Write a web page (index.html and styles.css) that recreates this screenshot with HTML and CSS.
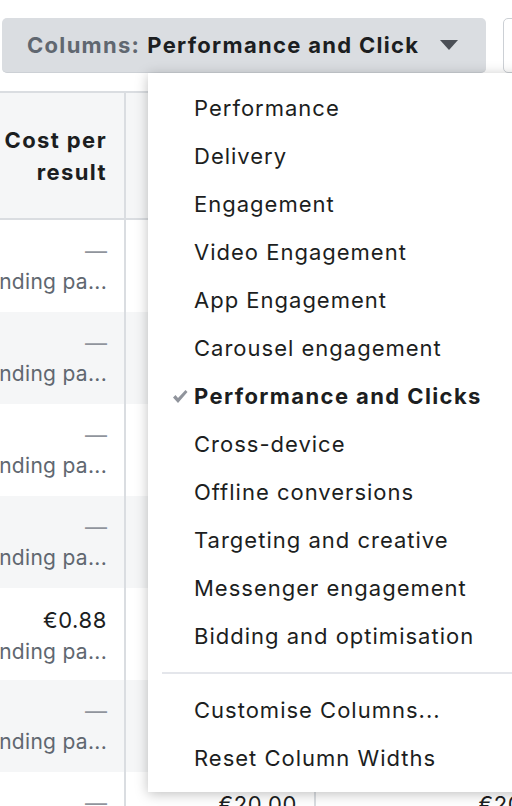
FILE: index.html
```html
<!DOCTYPE html>
<html>
<head>
    <title>Ads Manager Columns</title>
    <link rel="stylesheet" href="styles.css">
</head>
<body>
    <!-- toolbar -->
    <div class="toolbar">
        <button class="columns-btn">
            <span class="label">Columns:</span>
            <span class="value">Performance and Click</span>
            <span class="caret"></span>
        </button>
        <button class="side-btn"></button>
    </div>

    <!-- table behind the menu -->
    <div class="table">
        <div class="row head">
            <div class="cell first"><span class="title">Cost per<br>result</span></div>
            <div class="cell second"></div>
            <div class="cell third"></div>
        </div>
        <div class="row">
            <div class="cell first"><span class="dash">—</span><span class="sub">nding pa...</span></div>
            <div class="cell second"></div>
            <div class="cell third"></div>
        </div>
        <div class="row alt">
            <div class="cell first"><span class="dash">—</span><span class="sub">nding pa...</span></div>
            <div class="cell second"></div>
            <div class="cell third"></div>
        </div>
        <div class="row">
            <div class="cell first"><span class="dash">—</span><span class="sub">nding pa...</span></div>
            <div class="cell second"></div>
            <div class="cell third"></div>
        </div>
        <div class="row alt">
            <div class="cell first"><span class="dash">—</span><span class="sub">nding pa...</span></div>
            <div class="cell second"></div>
            <div class="cell third"></div>
        </div>
        <div class="row">
            <div class="cell first"><span class="money">€0.88</span><span class="sub">nding pa...</span></div>
            <div class="cell second"></div>
            <div class="cell third"></div>
        </div>
        <div class="row alt">
            <div class="cell first"><span class="dash">—</span><span class="sub">nding pa...</span></div>
            <div class="cell second"></div>
            <div class="cell third"></div>
        </div>
        <div class="row">
            <div class="cell first"><span class="dash">—</span></div>
            <div class="cell second"><span class="money">€20.00</span></div>
            <div class="cell third"><span class="money">€20.00</span></div>
        </div>
    </div>

    <!-- column presets menu -->
    <div class="menu">
        <ul class="menu-list">
            <li class="menu-item">Performance</li>
            <li class="menu-item">Delivery</li>
            <li class="menu-item">Engagement</li>
            <li class="menu-item">Video Engagement</li>
            <li class="menu-item">App Engagement</li>
            <li class="menu-item">Carousel engagement</li>
            <li class="menu-item selected">
                <svg class="check" width="16" height="15" viewBox="0 0 16 15">
                    <path d="M1 8.5 L3.5 6 L6 9 L13.5 1 L15.5 3 L6 14 Z" fill="#90949c"/>
                </svg>
                Performance and Clicks
            </li>
            <li class="menu-item">Cross-device</li>
            <li class="menu-item">Offline conversions</li>
            <li class="menu-item">Targeting and creative</li>
            <li class="menu-item">Messenger engagement</li>
            <li class="menu-item">Bidding and optimisation</li>
        </ul>
        <div class="separator"></div>
        <ul class="menu-list">
            <li class="menu-item">Customise Columns...</li>
            <li class="menu-item">Reset Column Widths</li>
        </ul>
    </div>
</body>
</html>
```

FILE: styles.css
```css
/* page */
body {
    margin: 0;
    font-family: 'Inter', 'Liberation Sans', sans-serif;
    background: #fff;
    color: #1c1e21;
    overflow: hidden;
    height: 806px;
    position: relative;
}

/* toolbar */
.toolbar {
    display: flex;
    gap: 17px;
    padding: 18px 0 18px 2px;
    height: 55px;
    width: 560px;
}

.columns-btn {
    display: flex;
    align-items: center;
    flex-shrink: 0;
    width: 484px;
    height: 55px;
    padding: 0 0 0 25px;
    border: none;
    border-bottom: 1px solid #ccd0d5;
    border-radius: 5px;
    background-color: #dadde1;
    font-family: inherit;
    font-size: 22px;
    letter-spacing: 1.3px;
    font-weight: 700;
    cursor: pointer;
}

.columns-btn .label {
    color: #606770;
    margin-right: 7px;
}

.columns-btn .value {
    color: #1c1e21;
}

.caret {
    width: 0;
    height: 0;
    margin-left: 21px;
    border-left: 9px solid transparent;
    border-right: 9px solid transparent;
    border-top: 10px solid #4b4f56;
}

.side-btn {
    flex-shrink: 0;
    width: 60px;
    height: 55px;
    border: 1px solid #ccd0d5;
    border-radius: 5px;
    background: #fff;
}

/* table */
.table {
    border-top: 2px solid #dadde1;
    width: 580px;
}

.row {
    display: flex;
    height: 92px;
    background: #fff;
}

.row.alt {
    background: #f5f6f7;
}

.row.head {
    height: 125px;
    background: #f5f6f7;
    border-bottom: 2px solid #dadde1;
}

.cell {
    display: flex;
    flex-direction: column;
    align-items: flex-end;
    flex-shrink: 0;
    box-sizing: border-box;
    padding: 16px 17px 0 0;
    border-right: 2px solid #dadde1;
}

.cell.first {
    width: 126px;
}

.cell.second {
    width: 190px;
}

.cell.third {
    width: 258px;
    border-right: none;
}

.head .cell {
    padding-top: 31px;
}

.title {
    font-weight: 700;
    font-size: 22px;
    line-height: 32px;
    text-align: right;
    letter-spacing: 1.4px;
}

.dash {
    color: #90949c;
    font-size: 22px;
    line-height: 30px;
}

.money {
    font-size: 22px;
    line-height: 32px;
    letter-spacing: 0.6px;
}

.sub {
    color: #606770;
    font-size: 21px;
    line-height: 32px;
    letter-spacing: 0.3px;
    white-space: nowrap;
}

/* dropdown menu */
.menu {
    position: absolute;
    left: 148px;
    top: 73px;
    width: 400px;
    padding: 11px 0 10px;
    background: #fff;
    box-shadow: 0 2px 12px rgba(0, 0, 0, 0.25);
}

.menu-list {
    list-style: none;
    margin: 0;
    padding: 0;
}

.menu-item {
    position: relative;
    height: 48px;
    line-height: 48px;
    padding-left: 46px;
    font-size: 22px;
    letter-spacing: 1px;
    color: #1c1e21;
    white-space: nowrap;
}

.menu-item.selected {
    font-weight: 700;
    letter-spacing: 1.4px;
}

.check {
    position: absolute;
    left: 24px;
    top: 17px;
}

.separator {
    height: 2px;
    margin: 12px 0 12px 14px;
    background: #e4e6eb;
}
```
